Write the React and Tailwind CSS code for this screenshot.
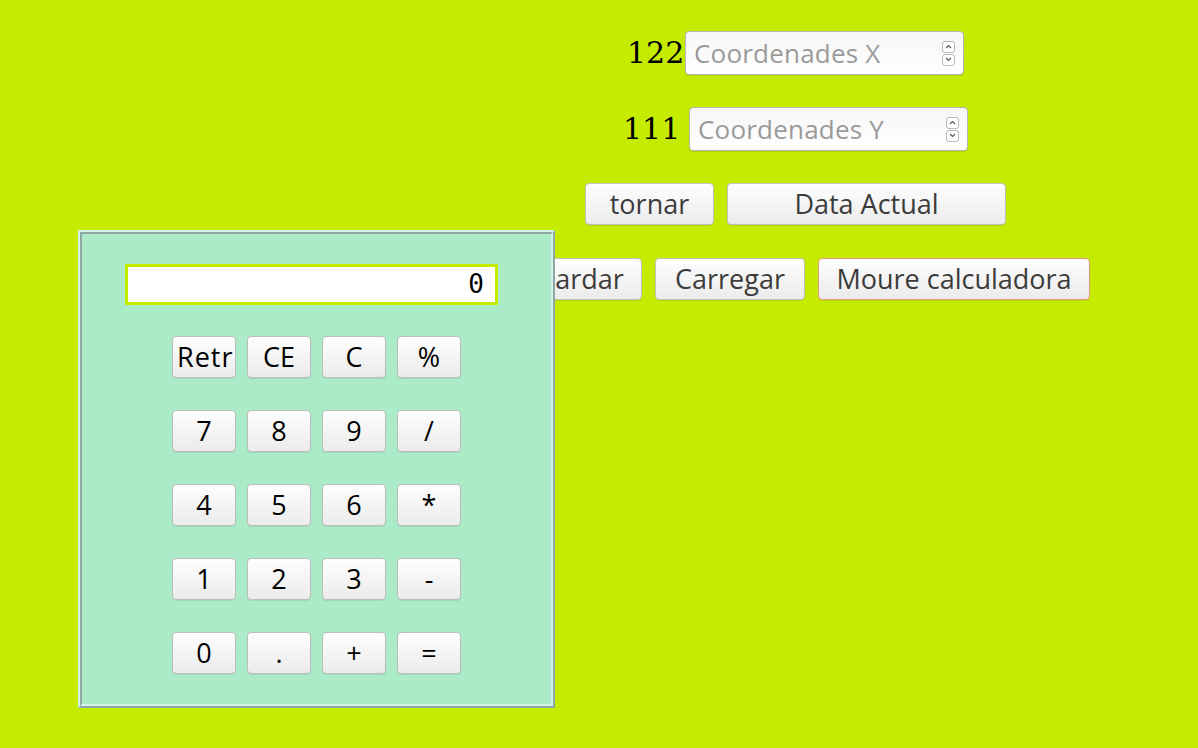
import React from "react";

const btnBase =
  "flex items-center justify-center overflow-hidden whitespace-nowrap rounded-[4px] border bg-gradient-to-b from-[#fefefe] to-[#ebebeb] shadow-[0_1px_1px_rgba(0,0,0,0.08)]";

function Spinner() {
  return (
    <div className="flex flex-col gap-[1px] mr-[8px]">
      <div className="w-[13px] h-[12px] rounded-[3px] border border-[#b9b9b9] bg-white flex items-center justify-center">
        <svg width="7" height="5" viewBox="0 0 7 5"><path d="M1 4 L3.5 1.5 L6 4" fill="none" stroke="#555" strokeWidth="1.1" /></svg>
      </div>
      <div className="w-[13px] h-[12px] rounded-[3px] border border-[#b9b9b9] bg-white flex items-center justify-center">
        <svg width="7" height="5" viewBox="0 0 7 5"><path d="M1 1 L3.5 3.5 L6 1" fill="none" stroke="#555" strokeWidth="1.1" /></svg>
      </div>
    </div>
  );
}

function CoordInput({ placeholder }) {
  return (
    <div className="flex items-center w-[279px] h-[44px] rounded-[4px] border border-[#b5b5b5] bg-gradient-to-b from-[#f6f6f6] to-white shadow-[0_1px_1px_rgba(0,0,0,0.1)]">
      <input
        type="text"
        placeholder={placeholder}
        className="flex-1 min-w-0 bg-transparent outline-none pl-[8px] text-[26px] tracking-[0.2px] text-[#333] placeholder:text-[#9a9a9a] font-['Open_Sans',sans-serif]"
      />
      <Spinner />
    </div>
  );
}

function TopButton({ children, w, extra = "border-[#c0c0c0]" }) {
  return (
    <button
      className={`${btnBase} ${extra} h-[42px] text-[27px] text-[#3c3c3c] font-['Open_Sans',sans-serif]`}
      style={{ width: w }}
    >
      {children}
    </button>
  );
}

const keys = ["Retr", "CE", "C", "%", "7", "8", "9", "/", "4", "5", "6", "*", "1", "2", "3", "-", "0", ".", "+", "="];

export default function App() {
  return (
    <div className="relative min-h-[748px] w-full bg-[#c4eb00] overflow-hidden">
      <div className="pl-[393px] pt-[31px] flex flex-col items-center gap-[32px]">
        <div className="flex items-center h-[44px]">
          <span className="w-[56px] mr-[2px] text-right text-[30px] leading-none text-black font-['DejaVu_Serif',serif]">122</span>
          <CoordInput placeholder="Coordenades X" />
        </div>
        <div className="flex items-center h-[44px]">
          <span className="w-[54px] mr-[12px] text-right text-[30px] leading-none text-black font-['DejaVu_Serif',serif]">111</span>
          <CoordInput placeholder="Coordenades Y" />
        </div>
        <div className="flex items-center gap-[13px]">
          <TopButton w={129}>tornar</TopButton>
          <TopButton w={279}>Data Actual</TopButton>
        </div>
        <div className="flex items-center gap-[13px] mt-[1px]">
          <TopButton w={141}>Guardar</TopButton>
          <TopButton w={150}>Carregar</TopButton>
          <TopButton w={272} extra="border-[#e8957f]">Moure calculadora</TopButton>
        </div>
      </div>

      <div className="absolute left-[78px] top-[230px] w-[477px] h-[478px] border-2 border-t-[#d3f2ea] border-l-[#d3f2ea] border-b-[#8fa8a4] border-r-[#8fa8a4]">
        <div className="w-full h-full border-2 border-t-[#8fa8a4] border-l-[#8fa8a4] border-b-[#d3f2ea] border-r-[#d3f2ea] bg-[#acebc7] flex flex-col pt-[30px]">
          <div className="ml-[43px] w-[373px] h-[41px] border-[3px] border-[#c4eb00] bg-white flex items-center justify-end pr-[11px] text-[26px] text-black font-['DejaVu_Sans_Mono',monospace]">
            0
          </div>
          <div className="mt-[31px] self-center grid grid-cols-[repeat(4,64px)] gap-x-[11px] gap-y-[32px]">
            {keys.map((k) => (
              <button
                key={k}
                className={`${btnBase} border-[#bdbdbd] h-[42px] w-[64px] text-[27px] text-black font-['Open_Sans',sans-serif] ${k === "Retr" ? "justify-start pl-[4px] tracking-[1px]" : ""}`}
              >
                {k}
              </button>
            ))}
          </div>
        </div>
      </div>
    </div>
  );
}
